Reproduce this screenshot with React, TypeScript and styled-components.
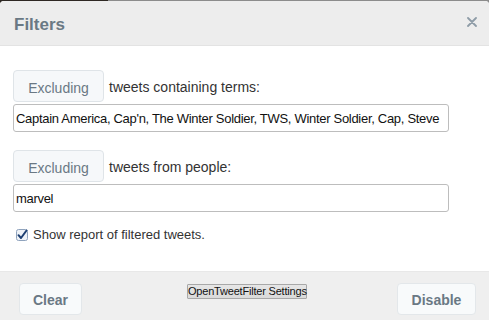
import React from "react";
import styled, { createGlobalStyle } from "styled-components";

const Global = createGlobalStyle`
  *, *::before, *::after { box-sizing: border-box; }
  html, body { margin: 0; padding: 0; }
  body {
    width: 489px; height: 320px; overflow: hidden;
    background: linear-gradient(to right, #2e2823 0, #2e2823 108px, #8c8c8c 108px, #8c8c8c 100%);
    font-family: "Liberation Sans", Arial, sans-serif;
  }
`;

const Modal = styled.div`
  margin-top: 1px;
  width: 489px;
  height: 319px;
  display: flex;
  flex-direction: column;
  background: #fff;
  border-radius: 4px 4px 0 0;
  overflow: hidden;
`;

const Header = styled.div`
  height: 45px;
  flex: none;
  display: flex;
  align-items: center;
  justify-content: space-between;
  padding: 0 10px 0 14px;
  background: #ededed;
  border-bottom: 1px solid #e3e3e3;
`;

const Title = styled.h3`
  margin: 0;
  font-size: 17px;
  font-weight: bold;
  color: #6a7984;
  padding-top: 3px;
`;

const Close = styled.button`
  border: 0;
  background: none;
  padding: 0;
  width: 14px;
  height: 14px;
  display: flex;
  align-items: center;
  justify-content: center;
  margin-top: -2px;
`;

const Body = styled.div`
  flex: 1;
  padding: 24px 40px 0 13px;
  display: flex;
  flex-direction: column;
`;

const Section = styled.div<{ $gap?: number }>`
  display: flex;
  flex-direction: column;
  gap: 2px;
  margin-bottom: ${(p) => p.$gap ?? 0}px;
`;

const Row = styled.div`
  display: flex;
  align-items: center;
  gap: 5px;
`;

const ModeButton = styled.button`
  width: 91px;
  height: 32px;
  border: 1px solid #dfe4e8;
  border-radius: 4px;
  background: #f6f8fa;
  color: #6a7884;
  font-family: "Liberation Sans", Arial, sans-serif;
  font-size: 14px;
  padding: 0;
  padding-top: 3px;
`;

const Label = styled.span`
  font-size: 14px;
  color: #333;
  padding-top: 1px;
`;

const TextInput = styled.input`
  width: 436px;
  height: 28px;
  border: 1px solid #bdbdbd;
  border-radius: 3px;
  padding: 0 2px;
  font-family: "Liberation Sans", Arial, sans-serif;
  font-size: 13px;
  letter-spacing: -0.3px;
  color: #111;
  background: #fff;
  outline: none;
`;

const CheckRow = styled.label`
  display: flex;
  align-items: center;
  gap: 5px;
  margin-top: 15px;
  padding-left: 3px;
  font-size: 13px;
  color: #333;
`;

const Footer = styled.div`
  height: 49px;
  flex: none;
  display: flex;
  align-items: flex-start;
  padding: 11px 13px 0 19px;
  background: #efefef;
  border-top: 1px solid #e8e8e8;
`;

const FooterButton = styled.button<{ $w: number; $push?: boolean }>`
  width: ${(p) => p.$w}px;
  height: 32px;
  border: 1px solid #e3e7ea;
  border-radius: 4px;
  background: #f8fafb;
  color: #6a7884;
  font-family: "Liberation Sans", Arial, sans-serif;
  font-size: 14px;
  font-weight: bold;
  padding: 2px 0 0;
  margin-left: ${(p) => (p.$push ? "auto" : "0")};
`;

const SysButton = styled.button`
  height: 15px;
  margin-top: 1px;
  margin-left: 105px;
  width: 120px;
  white-space: nowrap;
  padding: 0;
  border: 1px solid #a8a8a8;
  border-radius: 1px;
  background: linear-gradient(#e6e6e6, #dadada);
  font-family: "Liberation Sans", Arial, sans-serif;
  font-size: 11px;
  letter-spacing: -0.2px;
  color: #111;
  line-height: 13px;
`;

function CheckBox() {
  return (
    <svg width="12" height="12" viewBox="0 0 12 12">
      <rect x="0.5" y="0.5" width="11" height="11" rx="2" fill="#eef2f7" stroke="#8fa3bd" />
      <path d="M2.5 6.2 L5 9 L10.5 1.5" fill="none" stroke="#1d3f72" strokeWidth="2" strokeLinecap="round" strokeLinejoin="round" />
    </svg>
  );
}

export default function App() {
  return (
    <>
      <Global />
      <Modal>
        <Header>
          <Title>Filters</Title>
          <Close aria-label="close">
            <svg width="10" height="10" viewBox="0 0 10 10">
              <path d="M1 1 L9 9 M9 1 L1 9" stroke="#8e9ca7" strokeWidth="1.8" strokeLinecap="round" />
            </svg>
          </Close>
        </Header>
        <Body>
          <Section $gap={18}>
            <Row>
              <ModeButton>Excluding</ModeButton>
              <Label>tweets containing terms:</Label>
            </Row>
            <TextInput
              readOnly
              value="Captain America, Cap'n, The Winter Soldier, TWS, Winter Soldier, Cap, Steve"
            />
          </Section>
          <Section>
            <Row>
              <ModeButton>Excluding</ModeButton>
              <Label>tweets from people:</Label>
            </Row>
            <TextInput readOnly value="marvel" />
          </Section>
          <CheckRow>
            <CheckBox />
            <span>Show report of filtered tweets.</span>
          </CheckRow>
        </Body>
        <Footer>
          <FooterButton $w={63}>Clear</FooterButton>
          <SysButton>OpenTweetFilter Settings</SysButton>
          <FooterButton $w={79} $push>Disable</FooterButton>
        </Footer>
      </Modal>
    </>
  );
}
